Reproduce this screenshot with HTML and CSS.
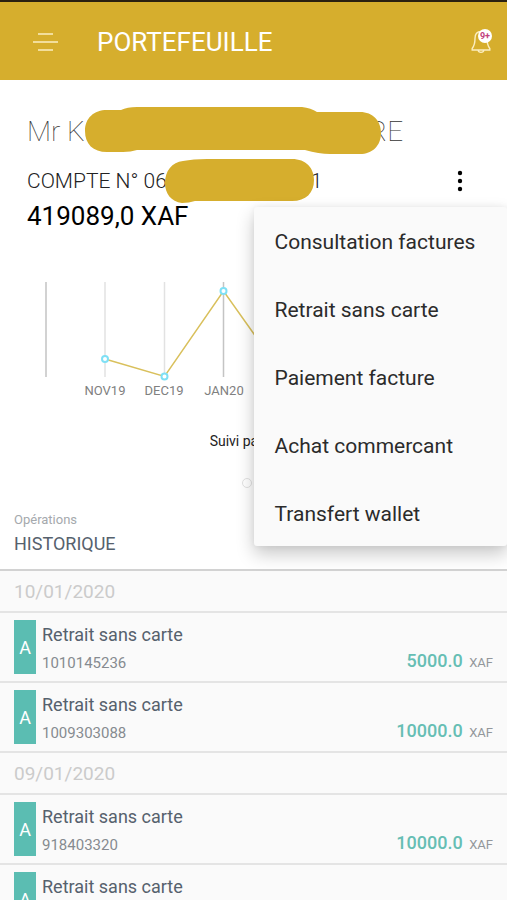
FILE: index.html
```
<!DOCTYPE html>
<html lang="fr">
<head>
    <meta charset="UTF-8">
    <meta name="viewport" content="width=device-width, initial-scale=1.0">
    <title>Portefeuille</title>
    <link rel="stylesheet" href="styles.css">
</head>
<body>
    <header class="top-bar">
        <button type="button" class="icon-btn menu-btn" aria-label="Menu">
            <svg width="26" height="18" viewBox="0 0 26 18">
                <path d="M6 1H21M1 9H26M6 17H21" />
            </svg>
        </button>
        <h1>PORTEFEUILLE</h1>
        <button type="button" class="icon-btn bell-btn" aria-label="Notifications">
            <svg width="20" height="24" viewBox="0 0 20 24">
                <path d="M10 1.500C5.500 1.500 4 5 4 8.500C4 14 3.500 15.500 1.200 18.500V20H18.800V18.500C16.500 15.500 16 14 16 8.500C16 5 14.500 1.500 10 1.500ZM7 20C7.500 23.200 12.500 23.200 13 20" />
            </svg>
            <span class="badge">9+</span>
        </button>
    </header>

    <section class="account">
        <h2 class="holder">
            <span>Mr K</span>
            <svg class="name-mask" width="297" height="50" viewBox="0 0 297 50">
                <path d="M22 4H36Q42 1 52 1H217Q226 2 232 6H275C288 6 296 15 296 27C296 40 287 48 275 48H245Q234 48 220 44H52Q46 46 38 46H22C8 46 0 38 0 25C0 12 9 4 22 4Z" />
            </svg>
            <span>RE</span>
        </h2>
        <div class="account-row">
            <p class="account-number">
                <span>COMPTE N° 06</span>
                <svg class="number-mask" width="150" height="46" viewBox="0 0 150 46">
                    <path d="M42 1H127C141 1 149 10 149 22C149 35 141 43 127 43H30Q24 45 17 45C6 44 0 35 0 25C0 13 7 4 18 3Q28 1 42 1Z" />
                </svg>
                <span>1</span>
            </p>
            <button type="button" class="icon-btn more-btn" aria-label="Plus d'options">
                <svg width="6" height="22" viewBox="0 0 6 22">
                    <circle cx="3" cy="3" r="2.200" />
                    <circle cx="3" cy="11" r="2.200" />
                    <circle cx="3" cy="19" r="2.200" />
                </svg>
            </button>
        </div>
        <p class="balance">419089,0 XAF</p>

        <ul class="dropdown">
            <li><button type="button">Consultation factures</button></li>
            <li><button type="button">Retrait sans carte</button></li>
            <li><button type="button">Paiement facture</button></li>
            <li><button type="button">Achat commercant</button></li>
            <li><button type="button">Transfert wallet</button></li>
        </ul>
    </section>

    <section class="chart">
        <svg class="chart-svg" viewBox="0 0 507 120">
            <path class="grid dark" d="M46 2V97M223.500 2V97" />
            <path class="grid" d="M105 2V97M164.500 2V97M283 2V97" />
            <polyline class="line" points="105,79 164.500,96.500 223.500,11 283,95" />
            <g class="points">
                <circle cx="105" cy="79" r="3" />
                <circle cx="164.500" cy="96.500" r="3" />
                <circle cx="223.500" cy="11" r="3" />
            </g>
            <g class="months">
                <text x="105" y="115">NOV19</text>
                <text x="164" y="115">DEC19</text>
                <text x="224" y="115">JAN20</text>
            </g>
        </svg>
        <p class="caption">Suivi par mois</p>
        <div class="dots">
            <span></span>
            <span></span>
        </div>
    </section>

    <section class="history-head">
        <p>Opérations</p>
        <h2>HISTORIQUE</h2>
    </section>

    <main class="history">
        <h3>10/01/2020</h3>
        <article class="operation">
            <span class="tag">A</span>
            <div class="details">
                <p class="title">Retrait sans carte</p>
                <p class="reference">1010145236</p>
            </div>
            <p class="amount">5000.0 <span>XAF</span></p>
        </article>
        <article class="operation">
            <span class="tag">A</span>
            <div class="details">
                <p class="title">Retrait sans carte</p>
                <p class="reference">1009303088</p>
            </div>
            <p class="amount">10000.0 <span>XAF</span></p>
        </article>
        <h3>09/01/2020</h3>
        <article class="operation">
            <span class="tag">A</span>
            <div class="details">
                <p class="title">Retrait sans carte</p>
                <p class="reference">918403320</p>
            </div>
            <p class="amount">10000.0 <span>XAF</span></p>
        </article>
        <article class="operation">
            <span class="tag">A</span>
            <div class="details">
                <p class="title">Retrait sans carte</p>
            </div>
        </article>
    </main>
</body>
</html>
```

FILE: styles.css
```
* {
    margin: 0;
    padding: 0;
    box-sizing: border-box;
    font-family: Roboto, sans-serif;
}

body {
    height: 100vh;
    display: flex;
    flex-direction: column;
    overflow: hidden;
    background: #fff;
}

button {
    border: none;
    background: none;
    cursor: pointer;
}

.icon-btn {
    display: flex;
    position: relative;
}

/* Top bar */
.top-bar {
    display: flex;
    align-items: center;
    flex-shrink: 0;
    height: 80px;
    padding: 2px 16px 0 32px;
    background: #d6ae2d;
    border-top: 2px solid #2a2010;
}

.top-bar h1 {
    flex: 1;
    margin-left: 39px;
    color: #fff;
    font-size: 26px;
    font-weight: 400;
}

.top-bar svg {
    fill: none;
    stroke: #fbeec0;
    stroke-width: 1.4;
}

.badge {
    position: absolute;
    top: -1px;
    right: -1px;
    width: 14px;
    height: 14px;
    border-radius: 50%;
    background: #fff;
    color: #c2417c;
    font-size: 9px;
    font-weight: 700;
    line-height: 14px;
    text-align: center;
}

/* Account */
.account {
    position: relative;
    flex-shrink: 0;
    padding: 26px 44px 0 27px;
}

.holder,
.account-number {
    display: flex;
    align-items: center;
}

.holder {
    height: 50px;
    margin-bottom: 2px;
    color: #333;
    font-size: 28px;
    font-weight: 100;
}

.name-mask,
.number-mask {
    position: relative;
    flex-shrink: 0;
    fill: #d6ae2d;
}

.name-mask {
    margin-right: -13px;
}

.account-row {
    display: flex;
    align-items: center;
    justify-content: space-between;
    height: 46px;
}

.account-number {
    color: #222;
    font-size: 21px;
    font-weight: 300;
}

.number-mask {
    margin: 0 -4px 0 -2px;
}

.balance {
    color: #000;
    font-size: 26px;
    line-height: 24px;
}

.dropdown {
    position: absolute;
    top: 127px;
    right: 0;
    z-index: 2;
    width: 50%;
    display: grid;
    gap: 4px;
    padding: 3px 0 0;
    list-style: none;
    background: #fafafa;
    border-radius: 3px;
    box-shadow: 0 8px 18px rgba(0, 0, 0, 0.22), 0 0 6px rgba(0, 0, 0, 0.06);
}

.dropdown button {
    width: 100%;
    height: 64px;
    padding-left: 21px;
    color: #2b2b2b;
    font-size: 21px;
    text-align: left;
}

/* Chart */
.chart {
    flex-shrink: 0;
    padding-top: 52px;
}

.chart-svg {
    display: block;
    width: 100%;
}

.grid {
    stroke: #e2e2e2;
    stroke-width: 1.5;
}

.grid.dark {
    stroke: #c4c4c4;
}

.line {
    fill: none;
    stroke: #d9c05c;
    stroke-width: 1.5;
}

.points circle {
    fill: #fff;
    stroke: #7fe0f5;
    stroke-width: 2;
}

.months text {
    fill: #808080;
    font-size: 13px;
    text-anchor: middle;
}

.caption {
    margin-top: 32px;
    color: #222;
    font-size: 14px;
    line-height: 18px;
    text-align: center;
}

.dots {
    display: flex;
    justify-content: center;
    gap: 4px;
    margin-top: 28px;
}

.dots span {
    width: 10px;
    height: 10px;
    border: 1px solid #e2e2e2;
    border-radius: 50%;
}

/* History */
.history-head {
    flex-shrink: 0;
    padding: 24px 14px 12px;
    border-bottom: 2px solid #d2d2d2;
}

.history-head p {
    color: #a5a9ad;
    font-size: 13px;
    line-height: 16px;
}

.history-head h2 {
    margin-top: 3px;
    color: #56616d;
    font-size: 18px;
    font-weight: 400;
    line-height: 26px;
}

.history {
    flex: 1;
    min-height: 0;
    overflow: hidden;
    background: #fafafa;
}

.history h3 {
    height: 42px;
    padding-left: 14px;
    border-bottom: 2px solid #e4e4e4;
    color: #cbcbcb;
    font-size: 19px;
    font-weight: 400;
    line-height: 42px;
}

.operation {
    display: flex;
    align-items: flex-start;
    height: 70px;
    padding: 7px 14px 0;
    border-bottom: 2px solid #e4e4e4;
}

.tag {
    width: 22px;
    height: 54px;
    background: #5bbdb2;
    color: #fff;
    font-size: 18px;
    line-height: 56px;
    text-align: center;
}

.details {
    flex: 1;
    padding: 3px 0 0 6px;
}

.title {
    color: #56616d;
    font-size: 18px;
    line-height: 24px;
}

.reference {
    margin-top: 6px;
    color: #868b90;
    font-size: 15px;
    line-height: 20px;
}

.amount {
    align-self: flex-end;
    margin-bottom: 6px;
    color: #66beb4;
    font-size: 18px;
    font-weight: 500;
    line-height: 24px;
}

.amount span {
    margin-left: 2px;
    color: #93979b;
    font-size: 13px;
    font-weight: 400;
}
```
